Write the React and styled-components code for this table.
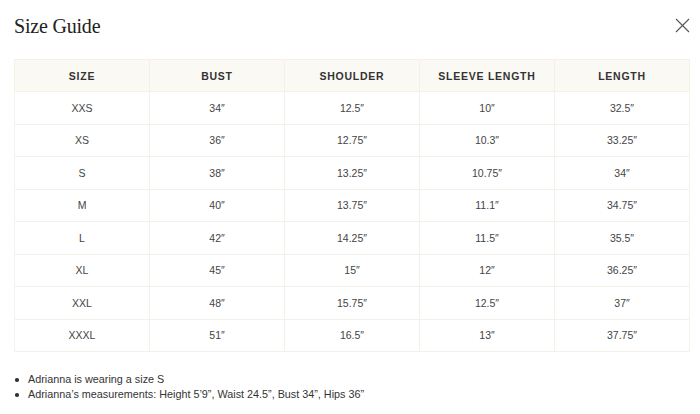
import React from "react";
import styled, { createGlobalStyle } from "styled-components";

const GlobalStyle = createGlobalStyle`
  html, body {
    margin: 0;
    padding: 0;
    background: #ffffff;
  }
  body {
    font-family: "Liberation Sans", Arial, sans-serif;
  }
`;

const Container = styled.div`
  width: 700px;
  height: 414px;
  box-sizing: border-box;
  padding: 14px 10px 0 14px;
  background: #ffffff;
  overflow: hidden;
`;

const Header = styled.div`
  display: flex;
  justify-content: space-between;
  align-items: flex-start;
  height: 45px;
`;

const Title = styled.h2`
  margin: 0;
  font-family: "Liberation Serif", "Times New Roman", serif;
  font-weight: 400;
  font-size: 20px;
  line-height: 24px;
  color: #222222;
  letter-spacing: -0.2px;
`;

const Close = styled.button`
  border: none;
  background: none;
  padding: 0;
  margin: 3px 0 0 0;
  width: 16px;
  height: 16px;
  cursor: pointer;
  display: flex;
  align-items: center;
  justify-content: center;
`;

const Table = styled.table`
  width: 676px;
  border-collapse: collapse;
  table-layout: fixed;
  font-family: "Liberation Sans", Arial, sans-serif;
  th,
  td {
    border: 1px solid #f5f1e8;
    text-align: center;
    padding: 0;
  }
  th {
    height: 31px;
    background: #fbf9f4;
    font-size: 10.5px;
    font-weight: 700;
    letter-spacing: 0.75px;
    color: #333333;
  }
  td {
    height: 31.5px;
    font-size: 10.5px;
    color: #444444;
  }
`;

const Notes = styled.ul`
  list-style: none;
  margin: 20px 0 0 0;
  padding: 0;
  li {
    position: relative;
    padding-left: 14px;
    font-size: 10.8px;
    line-height: 15px;
    color: #333333;
  }
  li::before {
    content: "";
    position: absolute;
    left: 1px;
    top: 6px;
    width: 3.5px;
    height: 3.5px;
    border-radius: 50%;
    background: #333333;
  }
`;

const columns = ["SIZE", "BUST", "SHOULDER", "SLEEVE LENGTH", "LENGTH"];

const rows = [
  ["XXS", "34\u2033", "12.5\u2033", "10\u2033", "32.5\u2033"],
  ["XS", "36\u2033", "12.75\u2033", "10.3\u2033", "33.25\u2033"],
  ["S", "38\u2033", "13.25\u2033", "10.75\u2033", "34\u2033"],
  ["M", "40\u2033", "13.75\u2033", "11.1\u2033", "34.75\u2033"],
  ["L", "42\u2033", "14.25\u2033", "11.5\u2033", "35.5\u2033"],
  ["XL", "45\u2033", "15\u2033", "12\u2033", "36.25\u2033"],
  ["XXL", "48\u2033", "15.75\u2033", "12.5\u2033", "37\u2033"],
  ["XXXL", "51\u2033", "16.5\u2033", "13\u2033", "37.75\u2033"],
];

const App = () => {
  return (
    <>
      <GlobalStyle />
      <Container>
        <Header>
          <Title>Size Guide</Title>
          <Close aria-label="Close">
            <svg width="15" height="15" viewBox="0 0 15 15">
              <path
                d="M1 1L14 14M14 1L1 14"
                stroke="#555555"
                strokeWidth="1.1"
                fill="none"
              />
            </svg>
          </Close>
        </Header>
        <Table>
          <thead>
            <tr>
              {columns.map((c) => (
                <th key={c}>{c}</th>
              ))}
            </tr>
          </thead>
          <tbody>
            {rows.map((r) => (
              <tr key={r[0]}>
                {r.map((v, i) => (
                  <td key={i}>{v}</td>
                ))}
              </tr>
            ))}
          </tbody>
        </Table>
        <Notes>
          <li>Adrianna is wearing a size S</li>
          <li>
            Adrianna’s measurements: Height 5’9”, Waist 24.5”, Bust 34”, Hips
            36”
          </li>
        </Notes>
      </Container>
    </>
  );
};

export default App;
